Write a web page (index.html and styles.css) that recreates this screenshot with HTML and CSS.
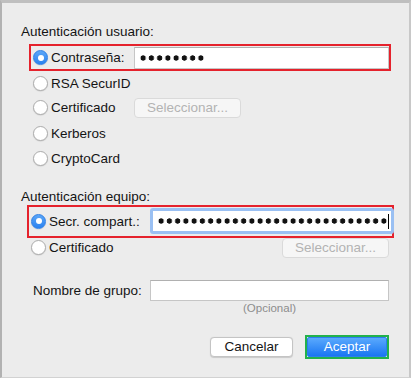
FILE: index.html
```html
<!DOCTYPE html>
<html>
<head>
    <title>Autenticación</title>
    <link rel="stylesheet" href="styles.css">
</head>
<body>
    <div class="window">
        <div class="section-title">Autenticación usuario:</div>
        <div class="group user-group">
            <div class="opt-row marked">
                <span class="radio checked"></span>
                <span class="opt-label">Contraseña:</span>
                <div class="field">
                    <span class="dots" style="width: 66px"></span>
                </div>
            </div>
            <div class="opt-row first-after">
                <span class="radio"></span>
                <span class="opt-label">RSA SecurID</span>
            </div>
            <div class="opt-row">
                <span class="radio"></span>
                <span class="opt-label">Certificado</span>
                <button type="button" class="pick-button" disabled>Seleccionar...</button>
            </div>
            <div class="opt-row">
                <span class="radio"></span>
                <span class="opt-label">Kerberos</span>
            </div>
            <div class="opt-row">
                <span class="radio"></span>
                <span class="opt-label">CryptoCard</span>
            </div>
        </div>

        <div class="section-title second">Autenticación equipo:</div>
        <div class="group machine-group">
            <div class="opt-row marked big">
                <span class="radio checked"></span>
                <span class="opt-label wide">Secr. compart.:</span>
                <div class="field focused">
                    <span class="dots" style="width: 231px"></span>
                    <span class="caret"></span>
                </div>
            </div>
            <div class="opt-row short">
                <span class="radio"></span>
                <span class="opt-label">Certificado</span>
                <button type="button" class="pick-button right" disabled>Seleccionar...</button>
            </div>
        </div>

        <div class="group-row">
            <label class="group-label" for="group-name">Nombre de grupo:</label>
            <input type="text" id="group-name" class="group-input">
        </div>
        <div class="hint">(Opcional)</div>

        <div class="footer">
            <button type="button" class="btn cancel">Cancelar</button>
            <div class="default-ring">
                <button type="button" class="btn accept">Aceptar</button>
            </div>
        </div>
    </div>
</body>
</html>
```

FILE: styles.css
```css
body {
    margin: 0;
    background-color: #ececec;
    font-family: "Liberation Sans", Arial, sans-serif;
    font-size: 13.5px;
    color: #141414;
}
.window {
    box-sizing: border-box;
    height: 378px;
    border-top: 3px solid #bfbfbf;
    border-left: 2px solid #b2b2b2;
    border-right: 2px solid #c8c8c8;
    border-bottom: 1px solid #d2d2d2;
    padding-top: 21px;
}
.section-title {
    margin-left: 19px;
    line-height: 16px;
    height: 16px;
}
.section-title.second {
    margin-top: 17px;
}
.user-group {
    margin-top: 4px;
    margin-left: 27px;
    width: 362px;
}
.machine-group {
    margin-left: 25px;
    width: 367px;
}
.opt-row {
    display: flex;
    align-items: center;
    height: 25.5px;
    padding-left: 4px;
    box-sizing: border-box;
}
.opt-row.first-after {
    height: 24px;
}
.opt-row.marked {
    height: 27px;
    border: 2px solid #e5222c;
    padding-left: 2px;
}
.opt-row.big {
    height: 33px;
    padding-left: 2px;
    padding-right: 4px;
}
.opt-row.short {
    height: 20px;
    padding-right: 5px;
}
.radio {
    box-sizing: border-box;
    width: 15px;
    height: 15px;
    border-radius: 50%;
    border: 1px solid #adadad;
    background-color: #fff;
    box-shadow: 0 0.5px 1px rgba(0, 0, 0, 0.15);
    flex: none;
    display: flex;
    align-items: center;
    justify-content: center;
}
.radio.checked {
    border-color: #2f80e6;
    background: linear-gradient(#5ba6f7, #2b82f0);
}
.radio.checked::after {
    content: "";
    width: 6px;
    height: 6px;
    border-radius: 50%;
    background-color: #fff;
}
.opt-label {
    margin-left: 3px;
    width: 83px;
    flex: none;
    white-space: nowrap;
}
.opt-label.wide {
    width: 101px;
}
.field {
    flex: 1;
    height: 22px;
    box-sizing: border-box;
    background-color: #fff;
    border: 1px solid #c6c6c6;
    border-top-color: #b0b0b0;
    display: flex;
    align-items: center;
    padding-left: 4px;
}
.field.focused {
    height: 26px;
    border: 3px solid #9ac0f3;
    border-radius: 3px;
    padding-left: 4px;
    padding-right: 2px;
}
.dots {
    height: 8px;
    background: radial-gradient(circle, #111 2.4px, transparent 2.9px) repeat-x;
    background-size: 8.25px 8px;
}
.caret {
    width: 1px;
    height: 15px;
    background-color: #000;
    margin-left: auto;
}
.pick-button {
    width: 107px;
    height: 20px;
    box-sizing: border-box;
    border: 1px solid #dadada;
    border-radius: 4px;
    background-color: #f6f6f6;
    color: #b3b3b3;
    font-family: inherit;
    font-size: 13.5px;
    padding: 0;
}
.pick-button.right {
    margin-left: auto;
}
.group-row {
    display: flex;
    align-items: center;
    margin-top: 22px;
    margin-left: 31px;
    width: 356px;
    height: 21px;
}
.group-label {
    width: 117px;
    flex: none;
}
.group-input {
    flex: 1;
    height: 21px;
    box-sizing: border-box;
    border: 1px solid #c6c6c6;
    border-top-color: #b0b0b0;
    background-color: #fff;
    margin: 0;
}
.hint {
    margin-left: 148px;
    width: 239px;
    text-align: center;
    font-size: 11.5px;
    color: #8d8d8d;
    line-height: 14px;
}
.footer {
    display: flex;
    justify-content: flex-end;
    align-items: center;
    gap: 12px;
    margin-top: 20px;
    margin-right: 20px;
    height: 24px;
}
.btn {
    font-family: inherit;
    font-size: 13.5px;
    height: 20px;
    box-sizing: border-box;
    border-radius: 4px;
    padding: 0;
}
.cancel {
    width: 83px;
    background-color: #fff;
    border: 1px solid #c4c4c4;
    box-shadow: 0 0.5px 1px rgba(0, 0, 0, 0.15);
    color: #141414;
}
.default-ring {
    border: 2px solid #22b14c;
    height: 24px;
    box-sizing: border-box;
    display: flex;
}
.accept {
    width: 80px;
    border: 1px solid #2a7fee;
    border-radius: 2px;
    background: linear-gradient(#5aa9fd, #1976f2);
    color: #fff;
}
```
